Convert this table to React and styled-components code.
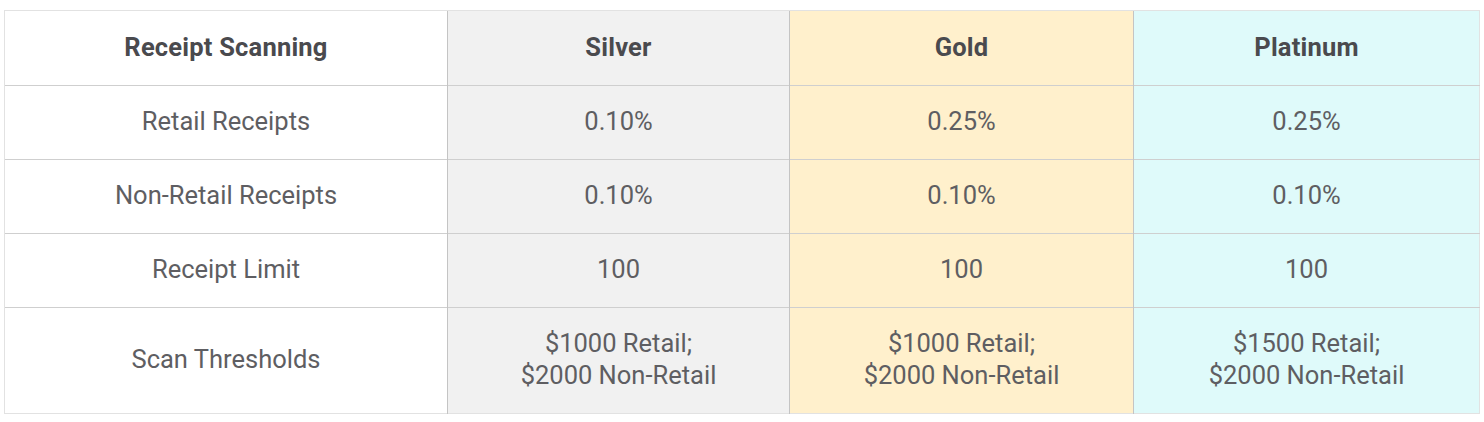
import React from "react";
import styled, { createGlobalStyle } from "styled-components";

const GlobalStyle = createGlobalStyle`
  html, body {
    margin: 0;
    padding: 0;
    background: #ffffff;
  }
  body {
    font-family: Roboto, "Liberation Sans", Arial, sans-serif;
  }
`;

const Wrap = styled.div`
  padding: 10px 5px 0 4px;
`;

const Table = styled.table`
  width: 1475px;
  border-collapse: collapse;
  table-layout: fixed;
  border: 1px solid #e2e2e2;
`;

const tints = {
  plain: "#ffffff",
  silver: "#f1f1f1",
  gold: "#fff0cc",
  platinum: "#dffafa",
};

const Cell = styled.td`
  background: ${(p) => tints[p.$tier || "plain"]};
  color: #5e5e62;
  font-size: 25.5px;
  line-height: 32px;
  text-align: center;
  vertical-align: middle;
  padding: 0 8px 3px;
  border-top: 1px solid #cfcfcf;
  border-left: 1px solid #c4c4c4;
  &:first-child {
    border-left: 1px solid #e2e2e2;
  }
`;

const HeadCell = styled(Cell).attrs({ as: "th" })`
  color: #4a4a4e;
  font-weight: 700;
  letter-spacing: 0.2px;
  border-top: 1px solid #e2e2e2;
`;

const Row = styled.tr`
  height: ${(p) => p.$h}px;
`;

const tiers = ["silver", "gold", "platinum"];

const rows = [
  { label: "Retail Receipts", values: ["0.10%", "0.25%", "0.25%"] },
  { label: "Non-Retail Receipts", values: ["0.10%", "0.10%", "0.10%"] },
  { label: "Receipt Limit", values: ["100", "100", "100"] },
  {
    label: "Scan Thresholds",
    values: [
      ["$1000 Retail;", "$2000 Non-Retail"],
      ["$1000 Retail;", "$2000 Non-Retail"],
      ["$1500 Retail;", "$2000 Non-Retail"],
    ],
    tall: true,
  },
];

export default function App() {
  return (
    <>
      <GlobalStyle />
      <Wrap>
        <Table>
          <colgroup>
            <col style={{ width: 443 }} />
            <col style={{ width: 342 }} />
            <col style={{ width: 344 }} />
            <col style={{ width: 346 }} />
          </colgroup>
          <thead>
            <Row $h={75}>
              <HeadCell>Receipt Scanning</HeadCell>
              <HeadCell $tier="silver">Silver</HeadCell>
              <HeadCell $tier="gold">Gold</HeadCell>
              <HeadCell $tier="platinum">Platinum</HeadCell>
            </Row>
          </thead>
          <tbody>
            {rows.map((r) => (
              <Row key={r.label} $h={r.tall ? 106 : 74}>
                <Cell>{r.label}</Cell>
                {r.values.map((v, i) => (
                  <Cell key={i} $tier={tiers[i]}>
                    {Array.isArray(v) ? (
                      <>
                        {v[0]}
                        <br />
                        {v[1]}
                      </>
                    ) : (
                      v
                    )}
                  </Cell>
                ))}
              </Row>
            ))}
          </tbody>
        </Table>
      </Wrap>
    </>
  );
}
